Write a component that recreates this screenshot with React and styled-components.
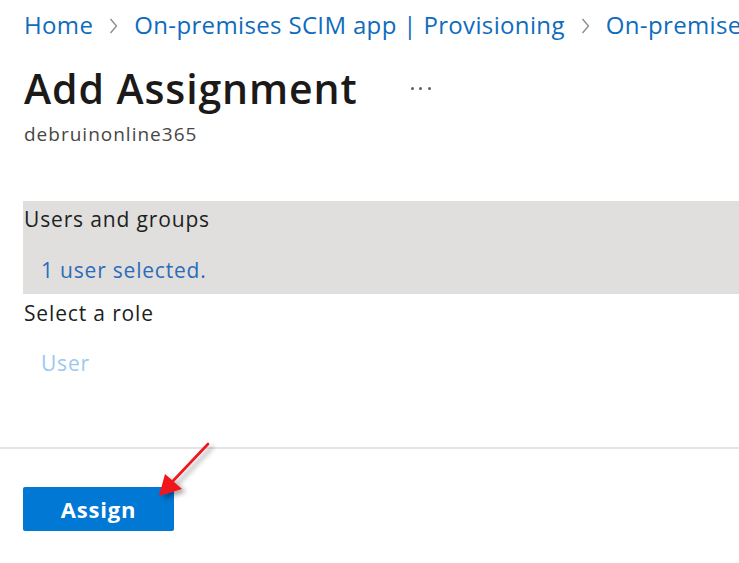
import React from "react";
import styled, { createGlobalStyle } from "styled-components";

const GlobalStyle = createGlobalStyle`
  body {
    margin: 0;
    background: #fff;
  }
`;

const ChevronIcon = () => (
  <Chevron width="9" height="18" viewBox="0 0 9 18">
    <polyline points="1.5,2 7.5,9 1.5,16" fill="none" stroke="#8a8886" strokeWidth="1.3" />
  </Chevron>
);

const App = () => {
  return (
    <Page>
      <GlobalStyle />
      <Header>
        <Breadcrumb>
          <Crumb>Home</Crumb>
          <ChevronIcon />
          <Crumb>On-premises SCIM app | Provisioning</Crumb>
          <ChevronIcon />
          <Crumb>On-premises SCIM app</Crumb>
        </Breadcrumb>
        <TitleRow>
          <Title>Add Assignment</Title>
          <More>
            <Dot />
            <Dot />
            <Dot />
          </More>
        </TitleRow>
        <Subtitle>debruinonline365</Subtitle>
      </Header>

      <Form>
        <Section>
          <Label>Users and groups</Label>
          <Value>1 user selected.</Value>
        </Section>
        <Label>Select a role</Label>
        <Value light>User</Value>
      </Form>

      <Footer>
        <Button>Assign</Button>
      </Footer>

      <Arrow width="80" height="80" viewBox="0 0 80 80">
        <defs>
          <filter id="sh" x="-50%" y="-50%" width="200%" height="200%">
            <feDropShadow dx="4" dy="3" stdDeviation="2.5" floodColor="#000" floodOpacity="0.35" />
          </filter>
        </defs>
        <g filter="url(#sh)">
          <line x1="58" y1="8" x2="22" y2="46" stroke="#f0141e" strokeWidth="2.6" strokeLinecap="round" />
          <polygon points="9,60 15,38 32,53" fill="#f0141e" />
        </g>
      </Arrow>
    </Page>
  );
};

const Page = styled.div`
  position: relative;
  width: 739px;
  height: 563px;
  overflow: hidden;
  font-family: "Open Sans", "Noto Sans", sans-serif;
  color: #201f1e;
`;

const Header = styled.div`
  padding: 12px 24px 0;
`;

const Breadcrumb = styled.nav`
  display: flex;
  align-items: center;
  gap: 16px;
  white-space: nowrap;
  font-size: 24px;
  line-height: 26px;
  letter-spacing: 0.35px;
`;

const Crumb = styled.a`
  flex-shrink: 0;
  color: #0f6cbd;
  text-decoration: none;
`;

const Chevron = styled.svg`
  flex-shrink: 0;
  margin-top: 2px;
`;

const TitleRow = styled.div`
  display: flex;
  align-items: center;
  gap: 53px;
  margin-top: 26px;
`;

const Title = styled.h1`
  margin: 0;
  font-size: 41px;
  line-height: 48px;
  font-weight: 600;
  letter-spacing: 0.9px;
  color: #1b1a19;
`;

const More = styled.div`
  display: flex;
  gap: 5.5px;
`;

const Dot = styled.span`
  width: 3px;
  height: 3px;
  border-radius: 50%;
  background: #605e5c;
`;

const Subtitle = styled.div`
  margin-top: 10px;
  font-size: 19px;
  line-height: 24px;
  color: #484644;
  letter-spacing: 1px;
`;

const Form = styled.div`
  margin-top: 55px;
  padding-left: 23px;
`;

const Section = styled.div`
  background: #e1dfdd;
  height: 93px;
  padding-top: 5px;
  box-sizing: border-box;
  margin-bottom: 6px;
`;

const Label = styled.div`
  padding-left: 1px;
  font-size: 21px;
  line-height: 26px;
  letter-spacing: 0.85px;
  color: #201f1e;
`;

const Value = styled.div`
  margin-top: ${(p) => (p.light ? "24px" : "25px")};
  padding-left: 18px;
  font-size: 21px;
  line-height: 26px;
  letter-spacing: 0.8px;
  color: ${(p) => (p.light ? "#9dc8ef" : "#2b6cb8")};
`;

const Footer = styled.div`
  margin-top: 71px;
  border-top: 2px solid #e4e4e4;
  padding: 38px 23px 0;
`;

const Button = styled.button`
  width: 151px;
  height: 44px;
  border: none;
  border-radius: 2px;
  background: #0078d4;
  color: #fff;
  font-family: "Open Sans", "Noto Sans", sans-serif;
  font-size: 22px;
  font-weight: 700;
  letter-spacing: 0.8px;
  cursor: pointer;
`;

const Arrow = styled.svg`
  position: absolute;
  left: 150px;
  top: 436px;
  overflow: visible;
`;

export default App;
